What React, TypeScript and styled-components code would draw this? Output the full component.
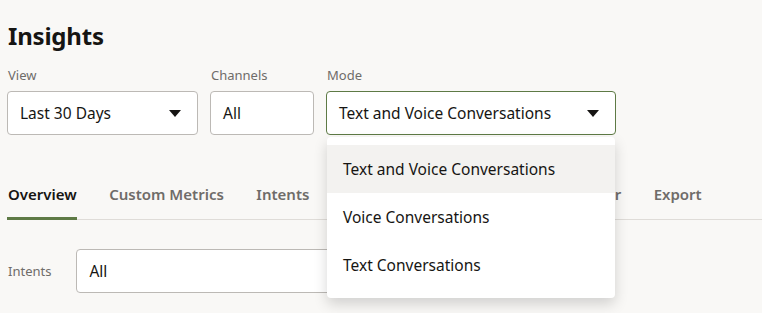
import styled, { createGlobalStyle } from "styled-components";

const GlobalStyle = createGlobalStyle`
  html, body {
    margin: 0;
    padding: 0;
    background: #f9f8f6;
  }
  body {
    font-family: "Noto Sans", "Liberation Sans", sans-serif;
    color: #161513;
  }
`;

const Page = styled.div`
  padding: 20px 0 0 7px;
  height: 313px;
  box-sizing: border-box;
  overflow: hidden;
`;

const Title = styled.h1`
  margin: 0;
  padding-left: 1px;
  font-size: 24px;
  font-weight: 700;
  line-height: 32px;
  letter-spacing: -0.2px;
`;

const Filters = styled.div`
  display: flex;
  gap: 12px;
  margin-top: 14px;
`;

const Field = styled.div`
  position: relative;
  display: flex;
  flex-direction: column;
`;

const Label = styled.label`
  padding-left: 1px;
  font-size: 13px;
  line-height: 18px;
  color: #6f6c69;
  margin-bottom: 7px;
`;

const InlineLabel = styled(Label).attrs({ as: "span" })`
  margin-bottom: 0;
`;

const Select = styled.div<{ $w: number; $focus?: boolean }>`
  width: ${(p) => p.$w}px;
  height: 44px;
  box-sizing: border-box;
  display: flex;
  align-items: center;
  justify-content: space-between;
  padding: 0 16px 0 12px;
  background: #fff;
  border: 1px solid ${(p) => (p.$focus ? "#5e7a45" : "#bcb9b5")};
  border-radius: 4px;
  font-size: 15.5px;
`;

const Caret = styled.span`
  width: 0;
  height: 0;
  border-left: 6px solid transparent;
  border-right: 6px solid transparent;
  border-top: 7px solid #161513;
`;

const Menu = styled.ul`
  position: absolute;
  top: calc(100% + 2px);
  left: 1px;
  width: 288px;
  margin: 0;
  padding: 8px 0 9px;
  list-style: none;
  background: #fff;
  border-radius: 4px;
  box-shadow: 0 6px 14px rgba(0, 0, 0, 0.16);
  z-index: 10;
`;

const Option = styled.li<{ $active?: boolean }>`
  height: 48px;
  display: flex;
  align-items: center;
  padding-left: 16px;
  font-size: 15.5px;
  background: ${(p) => (p.$active ? "#f3f2f0" : "transparent")};
`;

const Tabs = styled.div`
  display: flex;
  gap: 31.5px;
  margin-top: 36px;
  border-bottom: 1px solid #dfdcd8;
  width: 760px;
`;

const Tab = styled.div<{ $active?: boolean }>`
  height: 46px;
  display: flex;
  align-items: center;
  padding-left: 1px;
  font-size: 15px;
  font-weight: 600;
  color: ${(p) => (p.$active ? "#161513" : "#6f6c69")};
  border-bottom: 3px solid ${(p) => (p.$active ? "#5e7a45" : "transparent")};
  margin-bottom: -1px;
`;

const IntentsRow = styled.div`
  display: flex;
  align-items: center;
  gap: 25px;
  margin-top: 29px;
`;

const tabs = ["Overview", "Custom Metrics", "Intents", "Paths", "Conversations", "Retrainer", "Export"];

function App() {
  return (
    <Page>
      <GlobalStyle />
      <Title>Insights</Title>
      <Filters>
        <Field>
          <Label>View</Label>
          <Select $w={191}>
            Last 30 Days
            <Caret />
          </Select>
        </Field>
        <Field>
          <Label>Channels</Label>
          <Select $w={104}>All</Select>
        </Field>
        <Field>
          <Label>Mode</Label>
          <Select $w={290} $focus>
            Text and Voice Conversations
            <Caret />
          </Select>
          <Menu>
            <Option $active>Text and Voice Conversations</Option>
            <Option>Voice Conversations</Option>
            <Option>Text Conversations</Option>
          </Menu>
        </Field>
      </Filters>
      <Tabs>
        {tabs.map((t, i) => (
          <Tab key={t} $active={i === 0}>
            {t}
          </Tab>
        ))}
      </Tabs>
      <IntentsRow>
        <InlineLabel>Intents</InlineLabel>
        <Select $w={420}>All</Select>
      </IntentsRow>
    </Page>
  );
}

export default App;
